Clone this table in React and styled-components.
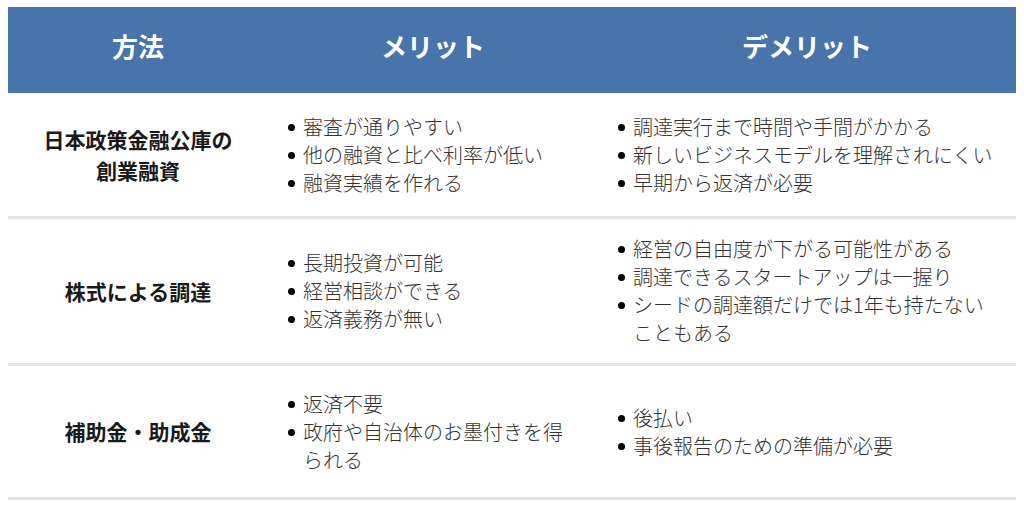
import React from "react";
import styled, { createGlobalStyle } from "styled-components";

const Global = createGlobalStyle`
  html, body { margin: 0; padding: 0; background: #fff; }
  body { font-family: "Noto Sans CJK JP", "Noto Sans", sans-serif; color: #333; }
`;

const Page = styled.div`
  padding: 7px 8px 0 8px;
  width: 1024px;
  box-sizing: border-box;
`;

const Table = styled.div`
  display: grid;
  grid-template-columns: 260px 330px 1fr;
  width: 1008px;
`;

const HeadCell = styled.div`
  background: #4674ab;
  color: #fff;
  font-weight: 700;
  font-size: 26px;
  line-height: 39px;
  text-align: center;
  padding: 19px 0 28px;
`;

const Cell = styled.div`
  display: flex;
  align-items: center;
  justify-content: ${(p) => (p.$center ? "center" : "flex-start")};
  min-height: ${(p) => p.$h}px;
  border-bottom: 3px solid #e6e5df;
  box-sizing: content-box;
  padding: ${(p) => (p.$center ? "0" : "0 20px 0 20px")};
`;

const Method = styled.div`
  font-weight: 700;
  font-size: 21px;
  line-height: 31px;
  color: #1a1a1a;
  text-align: center;
`;

const List = styled.ul`
  list-style: none;
  margin: 0;
  padding: 0;
  font-size: 20px;
  font-weight: 300;
  line-height: 28px;
  color: #333;
`;

const Item = styled.li`
  display: flex;
  gap: 8px;
`;

const Dot = styled.span`
  flex: 0 0 7px;
  width: 7px;
  height: 7px;
  border-radius: 50%;
  background: #000;
  margin-top: 11px;
`;

const rows = [
  {
    h: 123,
    method: ["日本政策金融公庫の", "創業融資"],
    merits: ["審査が通りやすい", "他の融資と比べ利率が低い", "融資実績を作れる"],
    demerits: ["調達実行まで時間や手間がかかる", "新しいビジネスモデルを理解されにくい", "早期から返済が必要"],
  },
  {
    h: 144,
    method: ["株式による調達"],
    merits: ["長期投資が可能", "経営相談ができる", "返済義務が無い"],
    demerits: ["経営の自由度が下がる可能性がある", "調達できるスタートアップは一握り", "シードの調達額だけでは1年も持たないこともある"],
  },
  {
    h: 131,
    method: ["補助金・助成金"],
    merits: ["返済不要", "政府や自治体のお墨付きを得られる"],
    demerits: ["後払い", "事後報告のための準備が必要"],
  },
];

function Bullets({ items }) {
  return (
    <List>
      {items.map((t) => (
        <Item key={t}>
          <Dot />
          <span>{t}</span>
        </Item>
      ))}
    </List>
  );
}

export default function App() {
  return (
    <Page>
      <Global />
      <Table>
        <HeadCell>方法</HeadCell>
        <HeadCell>メリット</HeadCell>
        <HeadCell>デメリット</HeadCell>
        {rows.map((r, i) => (
          <React.Fragment key={i}>
            <Cell $center $h={r.h}>
              <Method>
                {r.method.map((m, j) => (
                  <div key={j}>{m}</div>
                ))}
              </Method>
            </Cell>
            <Cell $h={r.h}>
              <Bullets items={r.merits} />
            </Cell>
            <Cell $h={r.h}>
              <Bullets items={r.demerits} />
            </Cell>
          </React.Fragment>
        ))}
      </Table>
    </Page>
  );
}
